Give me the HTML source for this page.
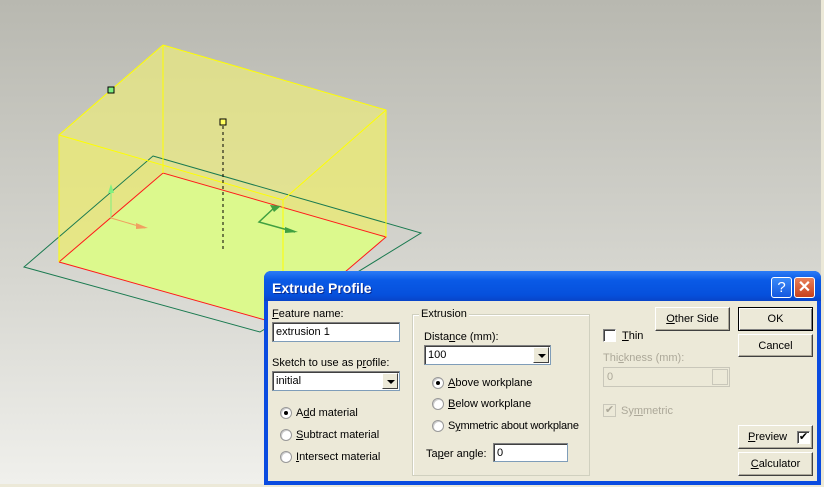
<!DOCTYPE html>
<html><head><meta charset="utf-8"><style>
*{margin:0;padding:0;box-sizing:border-box}
body{width:824px;height:487px;overflow:hidden;position:relative;font-family:"Liberation Sans",sans-serif;font-size:11px;color:#000;background:#ece9d8}
.vp{position:absolute;left:0;top:0;width:821px;height:484px;background:linear-gradient(#b8b8b0,#d8d8d2 60%,#f0f0ec)}
.a{position:absolute;white-space:nowrap}
.dlg{position:absolute;left:264px;top:271px;width:557px;height:214px;background:#0a4be0;border-radius:7px 7px 0 0}
.tb{position:absolute;left:0;top:0;width:557px;height:30px;border-radius:7px 7px 0 0;background:linear-gradient(#2c7cf6,#0a5ae6 30%,#0650dc 80%,#0844c8)}
.body{position:absolute;left:4px;top:30px;width:549px;height:180px;background:#ece9d8}
.inp{position:absolute;background:#fff;border:1px solid #7f9db9;border-top-color:#808080;border-left-color:#808080;box-shadow:inset 1px 1px 0 #404040;padding:3px 3px 0;font-size:11px}
.dd{position:absolute;right:1px;top:1px;width:16px;bottom:1px;background:#ece9d8;border:1px solid;border-color:#fff #404040 #404040 #fff}
.dd:after{content:"";position:absolute;left:4px;top:6px;border:4px solid transparent;border-top:4px solid #000;border-bottom:0}
.btn{position:absolute;background:#ece9d8;border:1px solid;border-color:#fff #404040 #404040 #fff;box-shadow:inset -1px -1px 0 #aca899;text-align:center;line-height:22px;font-size:11px}
.rad{position:absolute;width:12px;height:12px;border-radius:50%;background:#fff;border:1px solid #999;box-shadow:inset 1px 1px 0 #ccc}
.rad.on:after{content:"";position:absolute;left:3px;top:3px;width:4px;height:4px;border-radius:50%;background:#000}
.cb{position:absolute;width:13px;height:13px;background:#fff;border:1px solid;border-color:#808080 #fff #fff #808080;box-shadow:inset 1px 1px 0 #404040}
u{text-decoration:underline}
.g{color:#aca899}
</style></head><body>
<div class="vp"></div>
<svg class="a" style="left:0;top:0" width="824" height="487">
<polygon points="59,135 163,45 386,110 386,237 283,325 59,262" fill="#e8e880" opacity="0.75"/>
<polygon points="163,173 386,237 283,325 59,262" fill="#d6fc9c"/>
<polygon points="59,135 283,200 386,110 386,237 283,325 59,262" fill="#f0f060" opacity="0.25"/>
<polygon points="153,156 421,233 260,332 24,267" fill="none" stroke="#1a7a50" stroke-width="1"/>
<polyline points="59,262 163,173 386,237 283,325 59,262" fill="none" stroke="#ff1a1a" stroke-width="1"/>
<g stroke="#ffff00" stroke-width="1" fill="none">
<polyline points="59,262 59,135 163,45 386,110 386,237"/>
<line x1="163" y1="45" x2="163" y2="173"/>
<polyline points="59,135 283,200 386,110"/>
<line x1="283" y1="200" x2="283" y2="325"/>
</g>
<line x1="223" y1="126" x2="223" y2="250" stroke="#000" stroke-dasharray="3,3"/>
<rect x="108" y="87" width="6" height="6" fill="#80f080" stroke="#000"/>
<rect x="220" y="119" width="6" height="6" fill="#ffff60" stroke="#000"/>
<line x1="111" y1="218" x2="111" y2="186" stroke="#80f080"/>
<polygon points="108,193 111,184 114,193" fill="#80f080"/>
<line x1="111" y1="218" x2="145" y2="228" stroke="#f0a060"/>
<polygon points="136,223 148,228 136,229" fill="#f0a060"/>
<polyline points="275,207 259,222 295,232" fill="none" stroke="#40a040" stroke-width="1.5"/>
<polygon points="270,205 281,206 274,212" fill="#40a040"/>
<polygon points="285,227 298,232 285,233" fill="#40a040"/>
</svg>
<div class="dlg">
<div class="tb"></div>
<div class="a" style="left:8px;top:9px;color:#fff;font-weight:bold;font-size:14px;text-shadow:1px 1px 0 #0a2a90">Extrude Profile</div>
<div class="a" style="left:507px;top:6px;width:21px;height:21px;border:1px solid #fff;border-radius:3px;background:linear-gradient(#3a8af8,#1458e0);color:#fff;font-size:15px;text-align:center;line-height:19px">?</div>
<div class="a" style="left:530px;top:6px;width:21px;height:21px;border:1px solid #fff;border-radius:3px;background:linear-gradient(#e8805a,#c8401c);color:#fff;font-size:16px;text-align:center;line-height:19px;font-weight:bold">✕</div>
<div class="body"></div>
</div>
<div class="a" style="left:272px;top:308px"><u>F</u>eature name:</div>
<div class="inp" style="left:272px;top:322px;width:128px;height:20px">extrusion 1</div>
<div class="a" style="left:272px;top:357px">Sketch to use as p<u>r</u>ofile:</div>
<div class="inp" style="left:272px;top:371px;width:128px;height:20px">initial<div class="dd"></div></div>
<div class="rad on" style="left:280px;top:407px"></div><div class="a" style="left:296px;top:407px">A<u>d</u>d material</div>
<div class="rad" style="left:280px;top:429px"></div><div class="a" style="left:296px;top:429px"><u>S</u>ubtract material</div>
<div class="rad" style="left:280px;top:451px"></div><div class="a" style="left:296px;top:451px"><u>I</u>ntersect material</div>
<div class="a" style="left:412px;top:314px;width:178px;height:162px;border:1px solid #d0d0bf;box-shadow:inset 1px 1px 0 #fff"></div>
<div class="a" style="left:419px;top:308px;background:#ece9d8;padding:0 2px">Extrusion</div>
<div class="a" style="left:424px;top:331px">Dista<u>n</u>ce (mm):</div>
<div class="inp" style="left:424px;top:345px;width:127px;height:20px">100<div class="dd"></div></div>
<div class="rad on" style="left:432px;top:377px"></div><div class="a" style="left:448px;top:377px"><u>A</u>bove workplane</div>
<div class="rad" style="left:432px;top:398px"></div><div class="a" style="left:448px;top:398px"><u>B</u>elow workplane</div>
<div class="rad" style="left:432px;top:420px"></div><div class="a" style="left:448px;top:420px;letter-spacing:-0.2px">S<u>y</u>mmetric about workplane</div>
<div class="a" style="left:426px;top:448px">Ta<u>p</u>er angle:</div>
<div class="inp" style="left:493px;top:443px;width:75px;height:19px">0</div>
<div class="btn" style="left:655px;top:307px;width:75px;height:24px"><u>O</u>ther Side</div>
<div class="cb" style="left:603px;top:329px"></div><div class="a" style="left:622px;top:330px"><u>T</u>hin</div>
<div class="a g" style="left:603px;top:352px">Thi<u>c</u>kness (mm):</div>
<div class="a" style="left:603px;top:367px;width:127px;height:20px;border:1px solid #c9c7ba;background:#ece9d8;padding:3px 3px 0;color:#aca899">0<div class="a" style="right:1px;top:1px;width:16px;height:16px;border:1px solid #c9c7ba"></div></div>
<div class="cb" style="left:603px;top:404px;background:#ece9d8;box-shadow:none;border-color:#c9c7ba;color:#aca899;font-size:11px;line-height:11px;text-align:center">✔</div><div class="a g" style="left:621px;top:405px">Sy<u>m</u>metric</div>
<div class="btn" style="left:738px;top:307px;width:75px;height:24px;border:1px solid #000;box-shadow:inset 1px 1px 0 #fff,inset -1px -1px 0 #808080">OK</div>
<div class="btn" style="left:738px;top:334px;width:75px;height:23px">Cancel</div>
<div class="btn" style="left:738px;top:425px;width:75px;height:24px;text-align:left;padding-left:9px"><u>P</u>review<div class="cb" style="left:58px;top:5px;font-size:11px;line-height:11px;text-align:center">✔</div></div>
<div class="btn" style="left:738px;top:452px;width:75px;height:24px"><u>C</u>alculator</div>
</body></html>
